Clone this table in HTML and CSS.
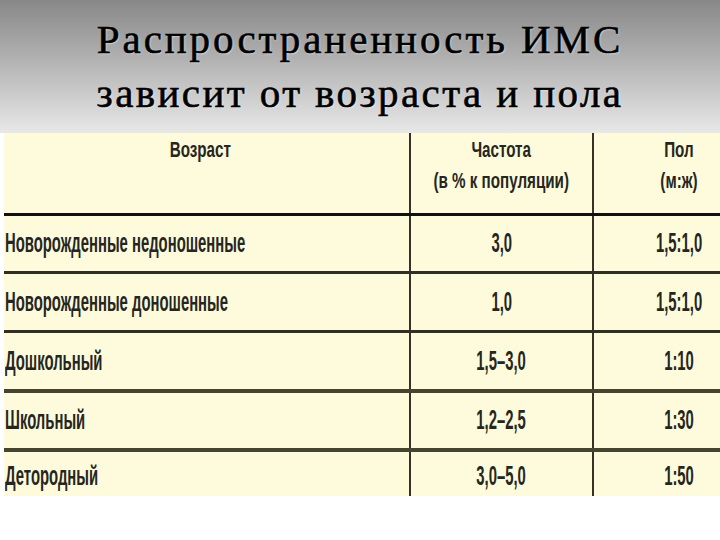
FILE: index.html
```html
<!DOCTYPE html>
<html lang="ru">
<head>
<meta charset="utf-8">
<title>Распространенность ИМС</title>
<link rel="stylesheet" href="styles.css">
</head>
<body>
<div class="slide">
  <header class="title">
    <div class="line">Распространенность ИМС</div>
    <div class="line second">зависит от возраста и пола</div>
  </header>
  <div class="table">
    <div class="row head">
      <div class="cell c1"><span class="t">Возраст</span></div>
      <div class="cell c2"><span class="t">Частота<br>(в % к популяции)</span></div>
      <div class="cell c3"><span class="t">Пол<br>(м:ж)</span></div>
    </div>
    <div class="row r1">
      <div class="cell c1"><span class="t">Новорожденные недоношенные</span></div>
      <div class="cell c2"><span class="t">3,0</span></div>
      <div class="cell c3"><span class="t">1,5:1,0</span></div>
    </div>
    <div class="row r2">
      <div class="cell c1"><span class="t">Новорожденные доношенные</span></div>
      <div class="cell c2"><span class="t">1,0</span></div>
      <div class="cell c3"><span class="t">1,5:1,0</span></div>
    </div>
    <div class="row r3 grey">
      <div class="cell c1"><span class="t">Дошкольный</span></div>
      <div class="cell c2"><span class="t">1,5–3,0</span></div>
      <div class="cell c3"><span class="t">1:10</span></div>
    </div>
    <div class="row r4 grey">
      <div class="cell c1"><span class="t">Школьный</span></div>
      <div class="cell c2"><span class="t">1,2–2,5</span></div>
      <div class="cell c3"><span class="t">1:30</span></div>
    </div>
    <div class="row r5 last">
      <div class="cell c1"><span class="t">Детородный</span></div>
      <div class="cell c2"><span class="t">3,0–5,0</span></div>
      <div class="cell c3"><span class="t">1:50</span></div>
    </div>
  </div>
</div>
</body>
</html>
```
FILE: styles.css
```css
html, body {
  margin: 0;
  padding: 0;
  background: #ffffff;
}
.slide {
  width: 720px;
  height: 540px;
  overflow: hidden;
  background: #ffffff;
}
.title {
  height: 133px;
  box-sizing: border-box;
  padding-top: 12px;
  background: linear-gradient(#888888 0%, #b2b2b2 45%, #e8e8e8 100%);
  text-align: center;
  font-family: "Liberation Serif", "DejaVu Serif", serif;
  font-size: 41px;
  line-height: 54px;
  letter-spacing: 2.9px;
  color: #000;
  -webkit-text-stroke: 0.6px #000;
  text-shadow: 1px 1px 2px rgba(255,255,255,0.5);
}
.title .second {
  letter-spacing: 2.4px;
}
.table {
  margin-left: 4px;
  width: 760px;
  background: #fdfbdc;
  font-family: "Liberation Sans", "Arial", sans-serif;
  font-weight: bold;
  color: #26261f;
}
.row {
  display: grid;
  grid-template-columns: 405px 183px 172px;
  box-sizing: border-box;
  border-bottom: 3px solid #2f2f22;
}
.row.head {
  height: 83px;
  border-bottom-color: #111;
}
.row.r1 { height: 58px; }
.row.r2 { height: 59px; }
.row.r3 { height: 60px; }
.row.r4 { height: 59px; }
.row.last { height: 44px; border-bottom: none; }
.row.grey {
  border-bottom: 4px solid #4a4a34;
  border-image: linear-gradient(#a3a38c 0 45%, #45452f 45% 100%) 1;
}
.cell {
  display: flex;
  align-items: center;
  font-size: 27px;
  white-space: nowrap;
}
.t {
  display: inline-block;
  transform: scaleX(0.55);
  transform-origin: center center;
}
.c1 {
  padding-left: 1px;
}
.c1 .t {
  transform-origin: left center;
}
.c2, .c3 {
  justify-content: center;
  text-align: center;
  border-left: 2px solid #33332a;
}
.head .cell {
  align-items: flex-start;
  font-size: 22px;
  line-height: 31px;
  padding-top: 1px;
}
.head .t {
  transform: scaleX(0.69);
}
.head .c1 {
  justify-content: center;
  padding-left: 0;
  padding-right: 12px;
}
.head .c1 .t {
  transform-origin: center center;
}
.last .cell {
  align-items: flex-start;
  padding-top: 9px;
}
```
